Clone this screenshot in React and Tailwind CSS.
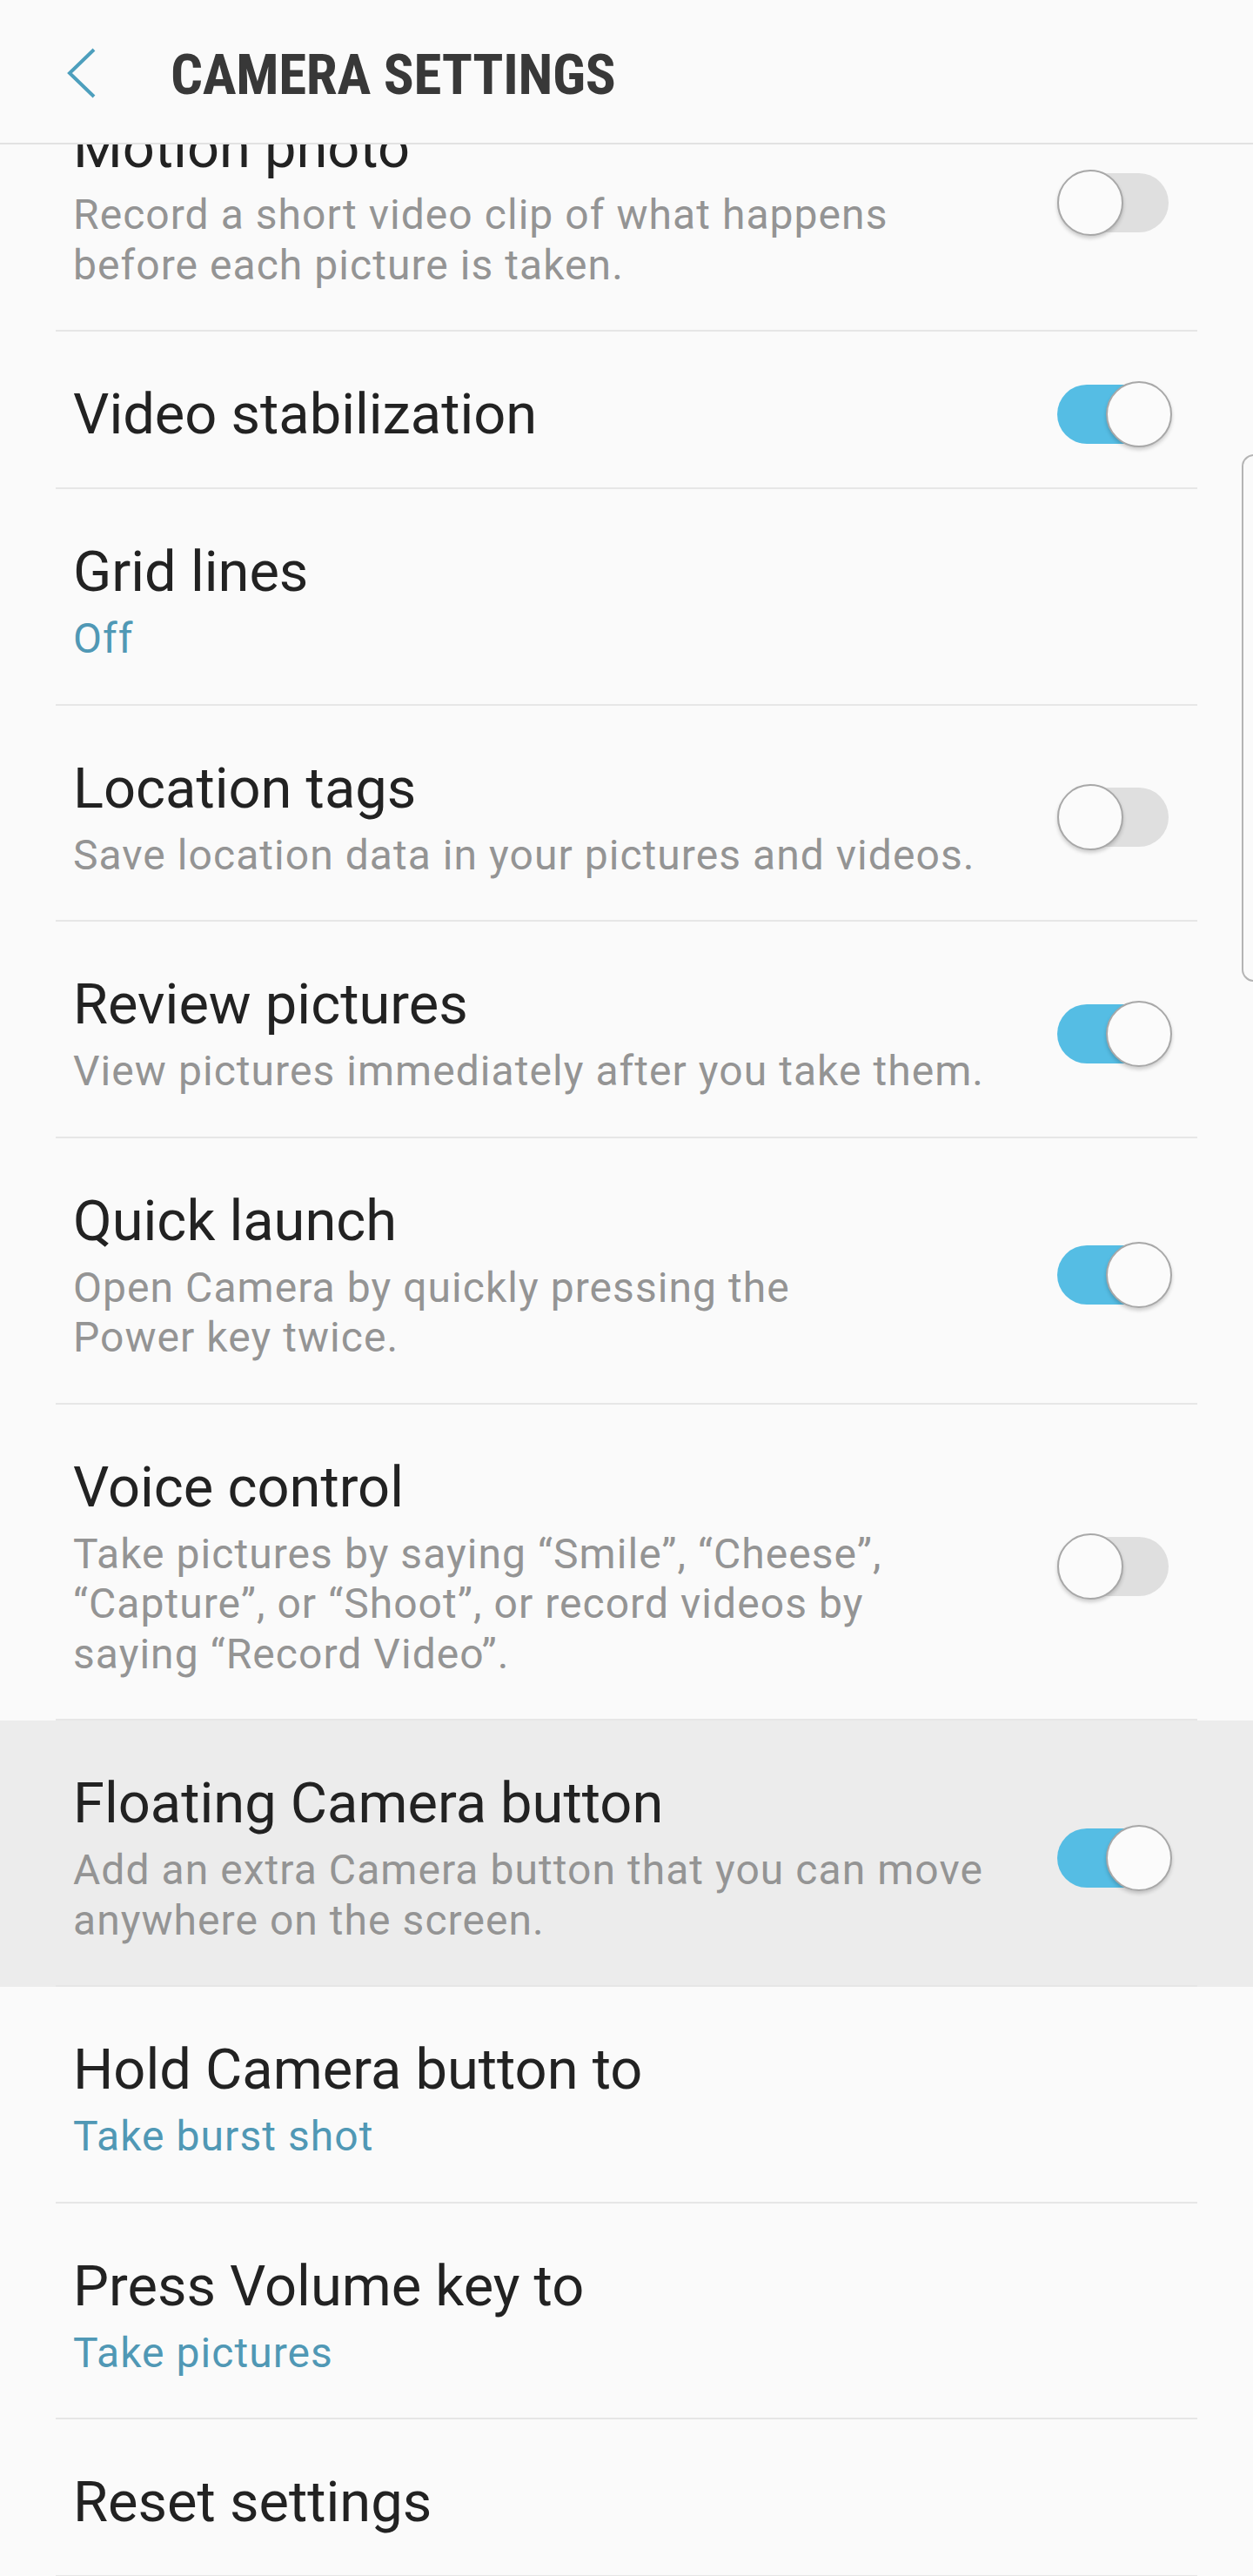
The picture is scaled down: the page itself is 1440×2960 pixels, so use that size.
import React from 'react'

const rows = [
  { title: 'Motion photo', sub: ['Record a short video clip of what happens', 'before each picture is taken.'], toggle: false },
  { title: 'Video stabilization', toggle: true },
  { title: 'Grid lines', value: 'Off' },
  { title: 'Location tags', sub: ['Save location data in your pictures and videos.'], toggle: false },
  { title: 'Review pictures', sub: ['View pictures immediately after you take them.'], toggle: true },
  { title: 'Quick launch', sub: ['Open Camera by quickly pressing the', 'Power key twice.'], toggle: true },
  {
    title: 'Voice control',
    sub: ['Take pictures by saying \u201cSmile\u201d, \u201cCheese\u201d,', '\u201cCapture\u201d, or \u201cShoot\u201d, or record videos by', 'saying \u201cRecord Video\u201d.'],
    toggle: false,
  },
  { title: 'Floating Camera button', sub: ['Add an extra Camera button that you can move', 'anywhere on the screen.'], toggle: true, active: true },
  { title: 'Hold Camera button to', value: 'Take burst shot' },
  { title: 'Press Volume key to', value: 'Take pictures' },
  { title: 'Reset settings' },
]

function Toggle({ on }) {
  return (
    <div className="relative w-[132px] h-[76px] shrink-0">
      <div className={`absolute left-0 top-[4px] w-[128px] h-[68px] rounded-full ${on ? 'bg-[#55bde4]' : 'bg-[#dfdfdf]'}`} />
      <div
        className={`absolute top-0 w-[76px] h-[76px] rounded-full bg-[#fbfbfb] border-2 border-[#a8a8a8] shadow-[0_3px_4px_rgba(0,0,0,0.18)] ${on ? 'right-0' : 'left-0'}`}
      />
    </div>
  )
}

function Row({ item }) {
  const lines = item.sub || (item.value ? [item.value] : null)
  return (
    <div className={item.active ? 'bg-[#ececec]' : ''}>
      <div
        className={`mx-[64px] border-b-2 border-[#e6e6e6] pl-[20px] pr-[29px] flex items-center justify-between ${
          lines ? 'pt-[57px] pb-[46px]' : 'h-[181px] pt-[10px]'
        }`}
      >
        <div className="flex flex-col">
          <div className="text-[65px] leading-[76px] text-[#222222]">{item.title}</div>
          {lines && (
            <div
              className={`mt-[10px] text-[48px] leading-[57.5px] tracking-[1.05px] ${
                item.value ? 'text-[#5098b5]' : 'text-[#949494]'
              }`}
            >
              {lines.map((l, i) => (
                <div key={i}>{l}</div>
              ))}
            </div>
          )}
        </div>
        {item.toggle !== undefined && <Toggle on={item.toggle} />}
      </div>
    </div>
  )
}

export default function App() {
  return (
    <div
      className="relative w-[1440px] h-[2960px] overflow-hidden bg-[#fafafa]"
      style={{ fontFamily: 'Roboto, "Noto Sans", sans-serif' }}
    >
      <div className="relative z-10 h-[166px] bg-[#fafafa] border-b-2 border-[#e2e2e2] flex items-center">
        <svg className="ml-[74px] mt-[4px]" width="40" height="60" viewBox="0 0 40 60" fill="none">
          <polyline points="34,3 6,30 34,57" stroke="#4d9fbd" strokeWidth="4" strokeLinejoin="miter" />
        </svg>
        <h1
          className="ml-[82px] mt-[10px] text-[65px] font-bold text-[#383838] tracking-[-0.3px]"
          style={{ fontFamily: '"Liberation Sans Narrow", "Roboto Condensed", Roboto, sans-serif' }}
        >
          CAMERA SETTINGS
        </h1>
      </div>
      <div className="mt-[-91px]">
        {rows.map((r) => (
          <Row key={r.title} item={r} />
        ))}
      </div>
      <div className="absolute left-[1427px] top-[522px] w-[24px] h-[606px] border-2 border-r-0 border-[#b4b4b4] rounded-l-[14px]" />
    </div>
  )
}
